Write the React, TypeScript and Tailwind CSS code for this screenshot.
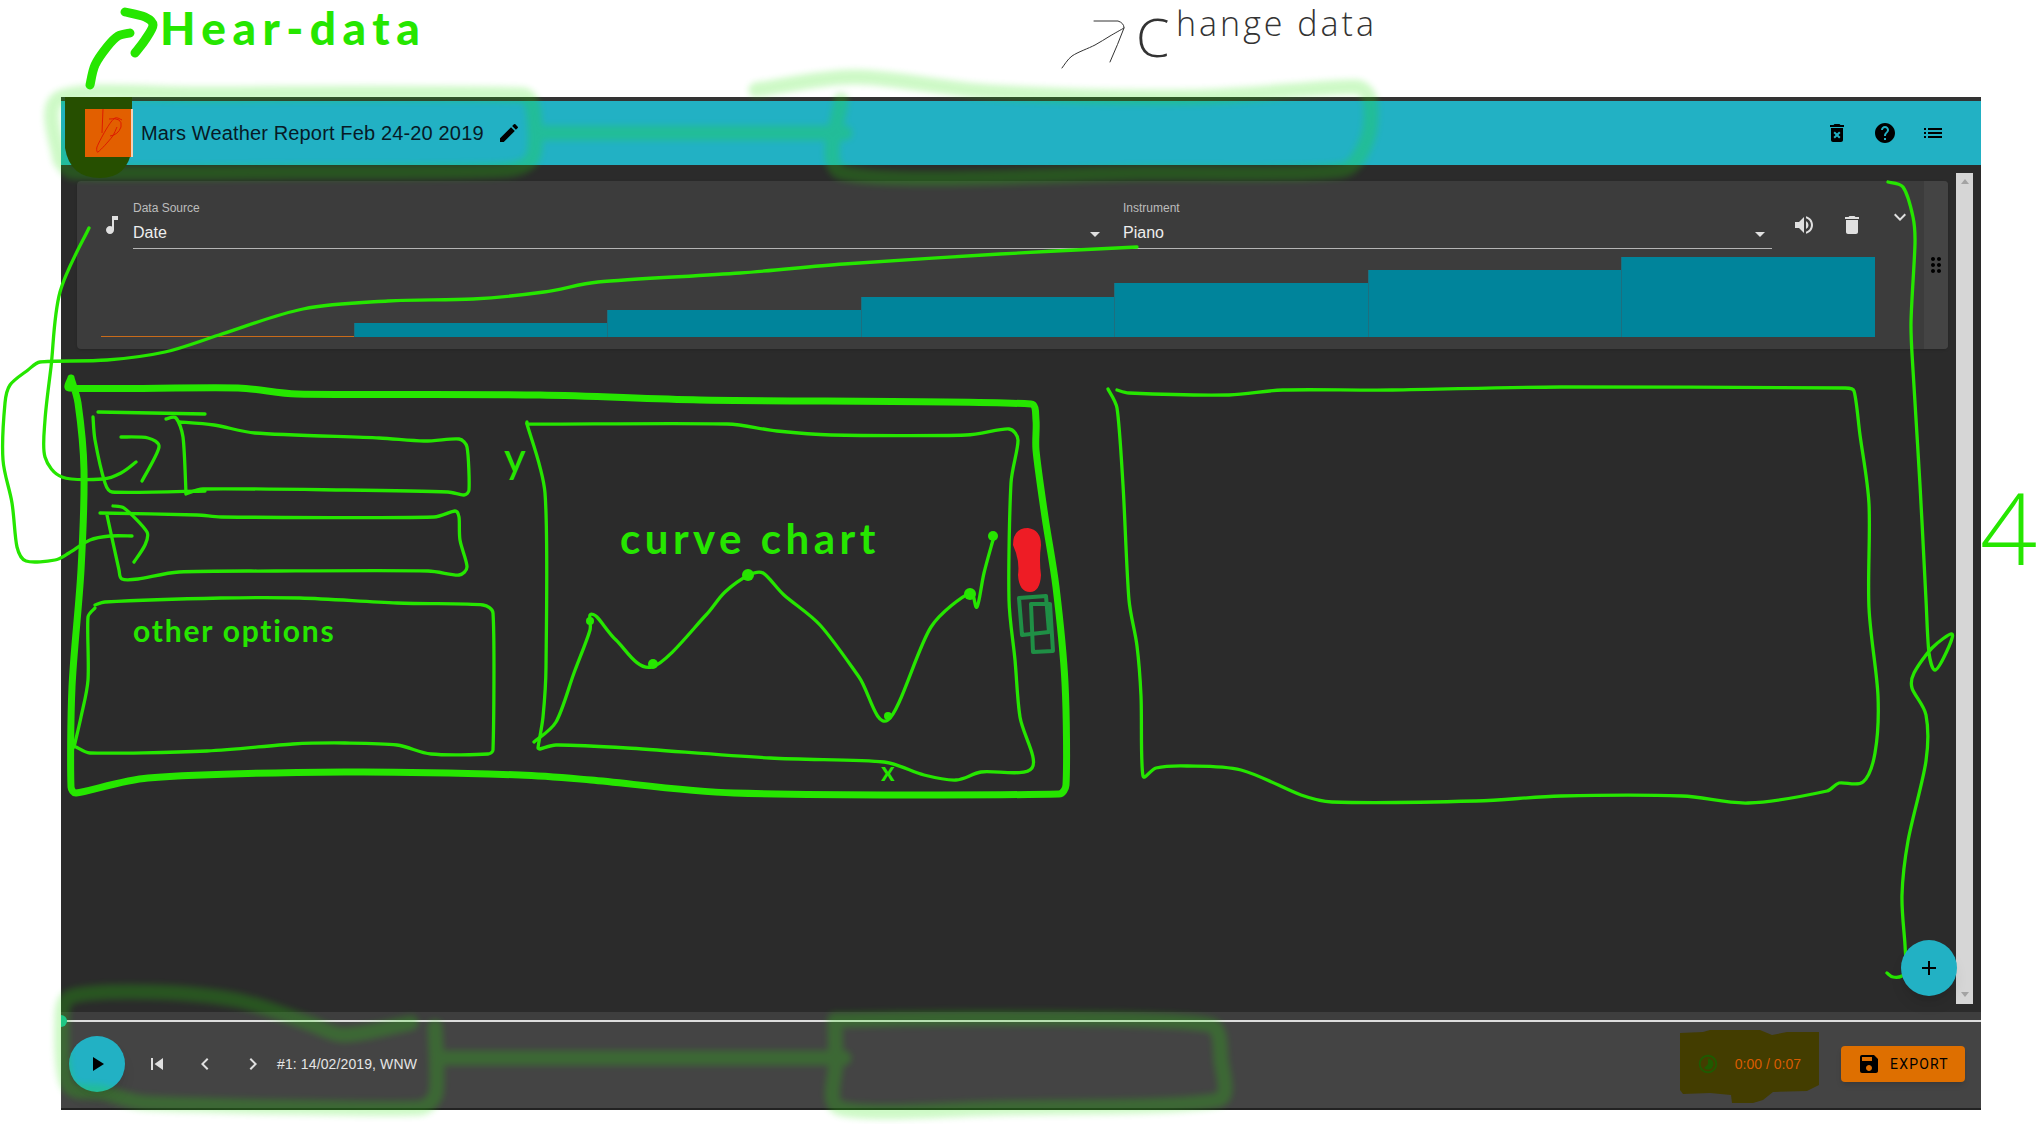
import React from 'react';
import {
  MdEdit, MdDeleteForever, MdHelp, MdList, MdMusicNote, MdArrowDropDown, MdVolumeUp, MdDelete,
  MdKeyboardArrowDown, MdDragIndicator, MdAdd, MdPlayArrow, MdSkipPrevious, MdChevronLeft,
  MdChevronRight, MdTimelapse, MdSave,
} from 'react-icons/md';

type Pt = [number, number];

// smooth line through the points; handles are capped to the segment so corners don't overshoot
function smooth(pts: Pt[]) {
  const p = [pts[0], ...pts, pts[pts.length - 1]];
  const handle = (a: Pt, b: Pt, seg: number): Pt => {
    const dx = b[0] - a[0];
    const dy = b[1] - a[1];
    const len = Math.hypot(dx, dy) || 1;
    const h = Math.min(len / 6, seg / 3);
    return [(dx / len) * h, (dy / len) * h];
  };
  let d = `M${p[1][0]} ${p[1][1]}`;
  for (let i = 1; i < p.length - 2; i++) {
    const seg = Math.hypot(p[i + 1][0] - p[i][0], p[i + 1][1] - p[i][1]);
    const t1 = handle(p[i - 1], p[i + 1], seg);
    const t2 = handle(p[i], p[i + 2], seg);
    d += ` C${p[i][0] + t1[0]} ${p[i][1] + t1[1]} ${p[i + 1][0] - t2[0]} ${p[i + 1][1] - t2[1]} ${p[i + 1][0]} ${p[i + 1][1]}`;
  }
  return d;
}

const GREEN = '#26e600';

const glowStrokes: Pt[][] = [
  [[60, 160], [60, 98], [200, 94], [523, 95], [533, 107], [533, 157], [507, 170], [300, 172], [73, 172], [60, 160]],
  [[540, 133], [700, 133], [845, 133]],
  [[756, 90], [856, 77], [990, 92], [1191, 97], [1356, 87], [1370, 100], [1367, 140], [1343, 170], [1146, 173], [843, 173], [841, 100]],
  [[411, 1023], [344, 1035], [308, 1023], [236, 1000], [147, 992], [70, 997], [62, 1023], [68, 1085], [104, 1093], [147, 1103], [419, 1108], [436, 1093], [435, 1027]],
  [[444, 1058], [600, 1058], [844, 1058]],
  [[835, 1020], [1000, 1018], [1210, 1025], [1221, 1060], [1218, 1100], [1000, 1108], [840, 1108], [836, 1060], [835, 1020]],
];

const thickStrokes: Pt[][] = [
  [[71, 378], [69, 388], [238, 388], [297, 394], [540, 395], [700, 400], [1031, 404], [1036, 420], [1036, 450], [1045, 517], [1056, 587], [1065, 683], [1066, 785], [1059, 794], [734, 793], [591, 780], [520, 775], [345, 772], [148, 778], [76, 793], [71, 787], [72, 687], [81, 570], [84, 470], [78, 403], [71, 378]],
];

const thinStrokes: Pt[][] = [
  [[98, 412], [205, 414]],
  [[93, 417], [95, 440], [105, 483], [112, 492], [205, 491]],
  [[121, 437], [148, 438], [159, 447], [142, 481]],
  [[89, 228], [60, 292], [51, 367], [45, 420], [45, 457], [62, 477], [103, 479], [121, 473], [136, 462]],
  [[166, 419], [176, 418], [183, 437], [186, 493]],
  [[179, 422], [214, 425], [255, 433], [379, 438], [424, 441], [459, 439], [467, 447], [469, 490], [464, 495], [448, 492], [345, 490], [203, 489], [186, 494]],
  [[100, 513], [197, 515], [221, 517], [434, 517], [455, 511], [459, 517], [460, 540], [467, 567], [459, 575], [428, 571], [276, 571], [179, 572], [138, 579], [122, 579], [119, 570], [107, 515]],
  [[113, 506], [124, 508], [147, 532], [145, 545], [134, 562]],
  [[132, 536], [110, 536], [90, 540], [69, 553], [55, 560], [26, 561], [17, 547], [12, 503], [3, 460], [5, 403], [10, 385], [28, 370], [40, 362], [107, 360], [165, 352], [219, 335], [303, 309], [388, 301], [473, 299], [544, 292], [598, 282], [740, 273], [844, 264], [1000, 254], [1137, 247]],
  [[95, 605], [105, 602], [221, 598], [300, 598], [397, 603], [483, 605], [493, 613], [493, 750], [488, 754], [431, 754], [397, 745], [345, 743], [293, 744], [207, 751], [90, 753], [76, 747]],
  [[95, 608], [88, 617], [88, 680], [81, 717], [74, 747]],
  [[527, 422], [527, 424], [727, 424], [777, 431], [831, 435], [966, 435], [1009, 429], [1018, 440], [1011, 483], [1009, 600], [1015, 660], [1020, 717], [1032, 768], [981, 772], [956, 780], [924, 775], [884, 762], [770, 758], [627, 748], [556, 745], [540, 749], [538, 748], [543, 717], [546, 667], [545, 493], [527, 424]],
  [[534, 742], [556, 722], [574, 673], [590, 630], [590, 615], [597, 617], [616, 640], [652, 667], [706, 615], [725, 592], [749, 575], [763, 573], [784, 595], [820, 625], [859, 677], [888, 720], [931, 627], [970, 593], [977, 607], [984, 573], [993, 540]],
  [[1117, 390], [1129, 393], [1229, 395], [1283, 390], [1392, 390], [1561, 387], [1845, 388], [1854, 391], [1860, 435], [1869, 504], [1869, 608], [1878, 696], [1875, 753], [1863, 782], [1839, 783], [1827, 791], [1748, 803], [1682, 796], [1561, 796], [1476, 801], [1332, 802], [1301, 795], [1241, 770], [1187, 766], [1156, 768], [1143, 776], [1141, 696], [1137, 646], [1129, 600], [1123, 485], [1117, 408], [1108, 389]],
  [[1888, 182], [1903, 187], [1913, 217], [1915, 243], [1911, 323], [1913, 370], [1920, 485], [1926, 600], [1929, 653], [1935, 670], [1946, 653], [1952, 634], [1932, 648], [1914, 673], [1912, 688], [1926, 715], [1926, 761], [1908, 841], [1902, 895], [1905, 945], [1906, 970], [1902, 976], [1893, 977], [1887, 973]],
];

const chartDots: [number, number, number][] = [
  [590, 621, 4], [653, 664, 5], [748, 575, 6], [888, 716, 4], [970, 594, 6], [993, 536, 5],
];

const bars = [14, 27, 40, 54, 67, 80];

function Annotations() {
  return (
    <div className="pointer-events-none absolute inset-0 z-10">
      <svg width="2037" height="1124" viewBox="0 0 2037 1124" fill="none" strokeLinecap="round" strokeLinejoin="round">
        <defs>
          <filter id="soft" x="-5%" y="-5%" width="110%" height="110%">
            <feGaussianBlur stdDeviation="3" />
          </filter>
        </defs>
        <g opacity="0.22" filter="url(#soft)">
          {glowStrokes.map((s, i) => (
            <path key={i} d={smooth(s)} stroke="#22e600" strokeWidth="15" />
          ))}
        </g>
        {/* paint over the logo and the timer */}
        <path d="M65 97H132V148Q128 178 100 178Q70 178 65 148Z" fill="#264f00" />
        <path d="M1680 1033L1703 1032L1710 1030H1760L1772 1035L1787 1032H1819V1085L1807 1091L1773 1092L1763 1100L1753 1103H1732L1731 1095L1710 1093L1683 1094L1680 1090Z" fill="#433d00" />
        <path d={smooth([[90, 85], [95, 65], [107, 47], [118, 36], [130, 33]])} stroke={GREEN} strokeWidth="9" />
        <path d={smooth([[125, 12], [145, 17], [153, 25], [145, 40], [135, 53]])} stroke={GREEN} strokeWidth="9" />
        {thickStrokes.map((s, i) => (
          <path key={i} d={smooth(s)} stroke={GREEN} strokeWidth="7" />
        ))}
        {thinStrokes.map((s, i) => (
          <path key={i} d={smooth(s)} stroke={GREEN} strokeWidth="3.3" />
        ))}
        {chartDots.map(([x, y, r], i) => (
          <circle key={i} cx={x} cy={y} r={r} fill={GREEN} />
        ))}
        <path d="M1013 545Q1013 528 1028 528Q1041 530 1041 545Q1039 560 1041 575Q1040 592 1030 592Q1019 592 1018 575Q1020 560 1013 545Z" fill="#ee1c25" />
        <g stroke="#1f8f45" strokeWidth="4">
          <path d="M1019 598L1046 596L1049 632L1022 635Z" />
          <path d="M1031 604L1050 604L1053 651L1033 652Z" />
        </g>
        <path d={smooth([[1062, 68], [1072, 56], [1095, 45], [1110, 36], [1124, 28]])} stroke="#333" strokeWidth="1" />
        <path d="M1094 21L1118 21Q1124 23 1124 28Q1118 44 1110 62" stroke="#333" strokeWidth="1" />
      </svg>
      <span className="absolute left-[160px] top-0 font-['Lato'] text-[46px] leading-[56px] font-black tracking-[6.5px] text-[#26e600]">Hear-data</span>
      <span className="absolute left-[1136px] top-[6px] font-['Open_Sans'] text-[54px] leading-[60px] font-light text-[#333]">C</span>
      <span className="absolute left-[1176px] top-[3px] font-['Open_Sans'] text-[34px] leading-[40px] font-light tracking-[3px] text-[#333]">hange data</span>
      <span className="absolute left-[133px] top-[612px] font-['Lato'] text-[30px] leading-[36px] font-bold tracking-[1.8px] text-[#26e600]">other options</span>
      <span className="absolute left-[620px] top-[514px] font-['Lato'] text-[42px] leading-[48px] font-bold tracking-[4.5px] text-[#26e600]">curve chart</span>
      <span className="absolute left-[504px] top-[432px] font-['Lato'] text-[42px] leading-[50px] font-medium text-[#26e600]">y</span>
      <span className="absolute left-[881px] top-[756px] font-['Lato'] text-[26px] leading-[30px] font-bold text-[#26e600]">x</span>
      <span className="absolute left-[1980px] top-[466px] font-['Open_Sans'] text-[100px] leading-[120px] font-light text-[#26e600]">4</span>
    </div>
  );
}

function SelectField({ label, value, className, arrow }: { label: string; value: string; className: string; arrow: string }) {
  return (
    <div className={`relative flex flex-col border-b border-[#b5b5b5] pb-[6px] ${className}`}>
      <span className="text-[12px] leading-[14px] text-[#bdbdbd]">{label}</span>
      <span className="mt-[9px] text-[16px] leading-[18px] text-[#eeeeee]">{value}</span>
      <MdArrowDropDown size={24} className={`absolute top-[21px] text-[#e0e0e0] ${arrow}`} />
    </div>
  );
}

function TrackCard() {
  return (
    <div className="flex h-[168px] overflow-hidden rounded-[4px] bg-[#3c3c3c] shadow-sm">
      <div className="flex min-w-0 flex-1 flex-col pt-[20px]">
        <div className="flex h-[48px] items-start pl-[23px] text-[#e0e0e0]">
          <MdMusicNote size={24} className="mt-[12px] shrink-0" />
          <SelectField label="Data Source" value="Date" arrow="right-[-2px]" className="ml-[9px] w-[972px]" />
          <SelectField label="Instrument" value="Piano" arrow="right-0" className="ml-[18px] w-[649px]" />
          <MdVolumeUp size={24} className="ml-[20px] mt-[12px] shrink-0" />
          <MdDelete size={24} className="ml-[24px] mt-[12px] shrink-0" />
          <MdKeyboardArrowDown size={24} className="ml-[24px] mt-[4px] shrink-0" />
        </div>
        <div className="ml-[24px] mt-[8px] flex h-[80px] w-[1774px] items-end">
          <div className="h-px flex-1 bg-[#c96b1a]" />
          {bars.map((h) => (
            <div key={h} className="flex-1 border-l border-[#1d6f7f] bg-[#00849b]" style={{ height: h }} />
          ))}
        </div>
      </div>
      <div className="flex w-[24px] items-center justify-center bg-[#444444]">
        <MdDragIndicator size={24} className="text-black" />
      </div>
    </div>
  );
}

function Signature() {
  return (
    <svg width="48" height="48" viewBox="0 0 48 48" fill="none" stroke="#dd1a00" strokeWidth="1">
      <path d="M18 0L17 24" />
      <path d={smooth([[37, 11], [30, 9], [22, 19], [12, 38], [13, 43], [27, 28], [32, 18]])} />
      <path d="M24 10Q38 8 36 18Q33 26 25 27" />
    </svg>
  );
}

export default function App() {
  return (
    <div className="relative h-[1124px] w-[2037px] overflow-hidden bg-white pl-[61px] pt-[97px] font-['Liberation_Sans',Arial,sans-serif]">
      <div className="flex h-[1013px] w-[1920px] flex-col border-t-4 border-b-2 border-t-[#333333] border-b-[#222222]">
        <header className="flex h-[64px] shrink-0 items-center bg-[#22b1c4] pl-[24px] pr-[36px] text-black">
          <div className="relative z-20 h-[48px] w-[48px] shrink-0 border-r-2 border-white/70 bg-[#e25f00]">
            <Signature />
          </div>
          <h1 className="ml-[8px] text-[20px] font-normal tracking-[0.15px] text-[#071a26]">Mars Weather Report Feb 24-20 2019</h1>
          <MdEdit size={24} className="ml-[13px]" />
          <div className="ml-auto flex items-center gap-[24px]">
            <MdDeleteForever size={24} />
            <MdHelp size={24} />
            <MdList size={24} />
          </div>
        </header>

        <main className="relative flex min-h-0 flex-1 bg-[#2b2b2b]">
          <div className="min-w-0 flex-1 pl-[16px] pt-[16px]">
            <TrackCard />
          </div>
          <div className="mx-[8px] my-[8px] flex w-[17px] flex-col items-center justify-between bg-[#d6d6d6] pb-[7px] pt-[6px]">
            <div className="h-0 w-0 border-x-[4px] border-b-[5px] border-x-transparent border-b-[#a3a3a3]" />
            <div className="h-0 w-0 border-x-[4px] border-t-[5px] border-x-transparent border-t-[#a3a3a3]" />
          </div>
          <button className="absolute bottom-[16px] right-[24px] z-20 flex h-[56px] w-[56px] items-center justify-center rounded-full bg-[#22b1c4] text-black shadow-lg">
            <MdAdd size={24} />
          </button>
        </main>

        <footer className="flex h-[96px] shrink-0 flex-col overflow-hidden bg-[#444444]">
          <div className="h-[8px] bg-[#3e3e3e]" />
          <div className="relative h-[2px] bg-[#dddddd]">
            <div className="absolute left-[-6px] top-[-5px] h-[12px] w-[12px] rounded-full bg-[#1ebfa8]" />
          </div>
          <div className="flex flex-1 items-center pb-[2px] pl-[8px] pr-[16px]">
            <button className="flex h-[56px] w-[56px] items-center justify-center rounded-full bg-[#22b1c4] text-black shadow-lg">
              <MdPlayArrow size={24} />
            </button>
            <div className="ml-[20px] flex items-center gap-[24px] text-[#e0e0e0]">
              <MdSkipPrevious size={24} />
              <MdChevronLeft size={24} />
              <MdChevronRight size={24} />
            </div>
            <span className="ml-[12px] text-[14px] tracking-[0.12px] text-[#e4e4e4]">#1: 14/02/2019, WNW</span>
            <div className="relative z-20 ml-auto flex items-center">
              <MdTimelapse size={22} className="text-[#1f5a00]" />
              <span className="ml-[16px] text-[14px] text-[#d85c00]">0:00 / 0:07</span>
            </div>
            <button className="relative z-20 ml-[40px] flex h-[36px] w-[124px] items-center rounded-[4px] bg-[#de6f00] pl-[16px] text-black shadow-md">
              <MdSave size={24} />
              <span className="ml-[9px] font-['Roboto'] text-[14px] tracking-[1.2px]">EXPORT</span>
            </button>
          </div>
        </footer>
      </div>
      <Annotations />
    </div>
  );
}
